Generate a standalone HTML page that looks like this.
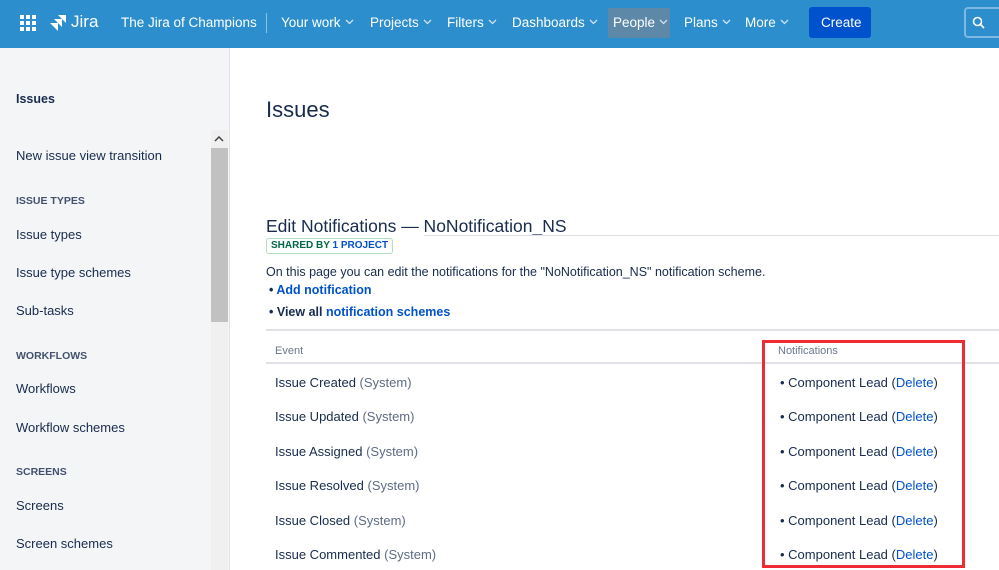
<!DOCTYPE html>
<html><head><meta charset="utf-8"><style>
*{box-sizing:border-box;margin:0;padding:0}
body{width:999px;height:570px;overflow:hidden;font-family:"Liberation Sans",sans-serif;background:#fff;color:#172b4d;position:relative}
.top{position:absolute;left:0;top:0;width:999px;height:48px;background:#2c8ecd;color:#fff}
.top span{position:absolute;top:15px;font-size:13.5px;white-space:nowrap}
.car{display:inline-block;width:9px;height:6px;margin-left:4px;vertical-align:2px}
.side{position:absolute;left:0;top:48px;width:230px;height:522px;background:#f4f5f7;border-right:1px solid #dfe1e6}
.side div{position:absolute;left:16px;font-size:13px;color:#172b4d;white-space:nowrap}
.side .h{font-size:10.5px;font-weight:bold;color:#42526e}
.a{position:absolute;white-space:nowrap}
.row{position:absolute;left:275px;font-size:13px;color:#172b4d}
.row i{font-style:normal;color:#5e6c84}
.n{position:absolute;left:780px;font-size:13px;color:#172b4d}
.n b{font-weight:normal;color:#0052cc}
</style></head><body>
<div class="top">
<svg style="position:absolute;left:20px;top:15px" width="16" height="16"><g fill="#fff"><rect x="0" y="0" width="4" height="4"/><rect x="6" y="0" width="4" height="4"/><rect x="12" y="0" width="4" height="4"/><rect x="0" y="6" width="4" height="4"/><rect x="6" y="6" width="4" height="4"/><rect x="12" y="6" width="4" height="4"/><rect x="0" y="12" width="4" height="4"/><rect x="6" y="12" width="4" height="4"/><rect x="12" y="12" width="4" height="4"/></g></svg>
<svg style="position:absolute;left:48px;top:14px" width="20" height="18"><path d="M18 1H10l8 8zM14 5H6l8 8zM10 9H2l8 8z" fill="#fff"/></svg>
<span style="left:71px;top:12px;font-size:17px">Jira</span>
<span style="left:121px">The Jira of Champions</span>
<div style="position:absolute;left:266px;top:13px;width:1px;height:20px;background:#8cc0e6"></div>
<span style="left:281px">Your work<svg class="car" viewBox="0 0 9 6"><path d="M1 1l3.5 3.5L8 1" stroke="#cfe3f3" stroke-width="1.3" fill="none"/></svg></span>
<span style="left:370px">Projects<svg class="car" viewBox="0 0 9 6"><path d="M1 1l3.5 3.5L8 1" stroke="#cfe3f3" stroke-width="1.3" fill="none"/></svg></span>
<span style="left:447px">Filters<svg class="car" viewBox="0 0 9 6"><path d="M1 1l3.5 3.5L8 1" stroke="#cfe3f3" stroke-width="1.3" fill="none"/></svg></span>
<div style="position:absolute;left:608px;top:8px;width:62px;height:30px;background:#5d88a8;border-radius:2px"></div>
<span style="left:512px">Dashboards<svg class="car" viewBox="0 0 9 6"><path d="M1 1l3.5 3.5L8 1" stroke="#cfe3f3" stroke-width="1.3" fill="none"/></svg></span>
<span style="left:613px">People<svg class="car" viewBox="0 0 9 6"><path d="M1 1l3.5 3.5L8 1" stroke="#cfe3f3" stroke-width="1.3" fill="none"/></svg></span>
<span style="left:684px">Plans<svg class="car" viewBox="0 0 9 6"><path d="M1 1l3.5 3.5L8 1" stroke="#cfe3f3" stroke-width="1.3" fill="none"/></svg></span>
<span style="left:745px">More<svg class="car" viewBox="0 0 9 6"><path d="M1 1l3.5 3.5L8 1" stroke="#cfe3f3" stroke-width="1.3" fill="none"/></svg></span>
<div style="position:absolute;left:809px;top:7px;width:62px;height:31px;background:#0052cc;border-radius:3px"></div>
<span style="left:821px">Create</span>
<div style="position:absolute;left:964px;top:7px;width:60px;height:31px;border:2px solid #7fb8e2;border-radius:4px"></div>
<svg style="position:absolute;left:972px;top:16px" width="13" height="13"><circle cx="5.5" cy="5.5" r="4" stroke="#fff" stroke-width="1.6" fill="none"/><path d="M8.5 8.5L12 12" stroke="#fff" stroke-width="1.6"/></svg>
</div>
<div class="side">
<div style="top:44px;font-weight:bold;font-size:12.5px">Issues</div>
<div style="top:100px">New issue view transition</div>
<div class="h" style="top:147px">ISSUE TYPES</div>
<div style="top:179px">Issue types</div>
<div style="top:217px">Issue type schemes</div>
<div style="top:255px">Sub-tasks</div>
<div class="h" style="top:302px">WORKFLOWS</div>
<div style="top:333px">Workflows</div>
<div style="top:372px">Workflow schemes</div>
<div class="h" style="top:418px">SCREENS</div>
<div style="top:450px">Screens</div>
<div style="top:488px">Screen schemes</div>
<div style="left:211px;top:82px;width:17px;height:440px;background:#f0f0f0"></div>
<div style="left:211px;top:100px;width:17px;height:174px;background:#c1c1c1"></div>
<svg style="position:absolute;left:214px;top:88px" width="10" height="6"><path d="M1 5l4-4 4 4" stroke="#444" stroke-width="1.5" fill="none"/></svg>
</div>
<div class="a" style="left:266px;top:97px;font-size:22px">Issues</div>
<div class="a" style="left:266px;top:216px;font-size:17.5px">Edit Notifications — NoNotification_NS</div>
<div style="position:absolute;left:424px;top:235px;width:575px;height:1px;background:#dfe1e6"></div>
<div class="a" style="left:266px;top:238px;height:16px;padding:0 4px;border:1px solid #b3dfc1;border-radius:3px;font-size:10px;font-weight:bold;line-height:14px;color:#006644">SHARED BY <span style="color:#0052cc">1 PROJECT</span></div>
<div class="a" style="left:266px;top:265px;font-size:12.5px">On this page you can edit the notifications for the "NoNotification_NS" notification scheme.</div>
<div class="a" style="left:269px;top:283px;font-size:12.5px;font-weight:bold">• <span style="color:#0052cc">Add notification</span></div>
<div class="a" style="left:269px;top:305px;font-size:12.5px;font-weight:bold">• View all <span style="color:#0052cc">notification schemes</span></div>
<div style="position:absolute;left:266px;top:329px;width:733px;height:2px;background:#dfe1e6"></div>
<div class="a" style="left:275px;top:345px;font-size:11px;color:#6b778c">Event</div>
<div class="a" style="left:778px;top:345px;font-size:11px;color:#6b778c">Notifications</div>
<div style="position:absolute;left:266px;top:362px;width:733px;height:2px;background:#dfe1e6"></div>
<div class="row" style="top:375px">Issue Created <i>(System)</i></div>
<div class="row" style="top:409px">Issue Updated <i>(System)</i></div>
<div class="row" style="top:444px">Issue Assigned <i>(System)</i></div>
<div class="row" style="top:478px">Issue Resolved <i>(System)</i></div>
<div class="row" style="top:513px">Issue Closed <i>(System)</i></div>
<div class="row" style="top:547px">Issue Commented <i>(System)</i></div>
<div class="n" style="top:375px">• Component Lead (<b>Delete</b>)</div>
<div class="n" style="top:409px">• Component Lead (<b>Delete</b>)</div>
<div class="n" style="top:444px">• Component Lead (<b>Delete</b>)</div>
<div class="n" style="top:478px">• Component Lead (<b>Delete</b>)</div>
<div class="n" style="top:513px">• Component Lead (<b>Delete</b>)</div>
<div class="n" style="top:547px">• Component Lead (<b>Delete</b>)</div>
<div style="position:absolute;left:762px;top:340px;width:203px;height:228px;border:3px solid #ee2a33"></div>
</body></html>
